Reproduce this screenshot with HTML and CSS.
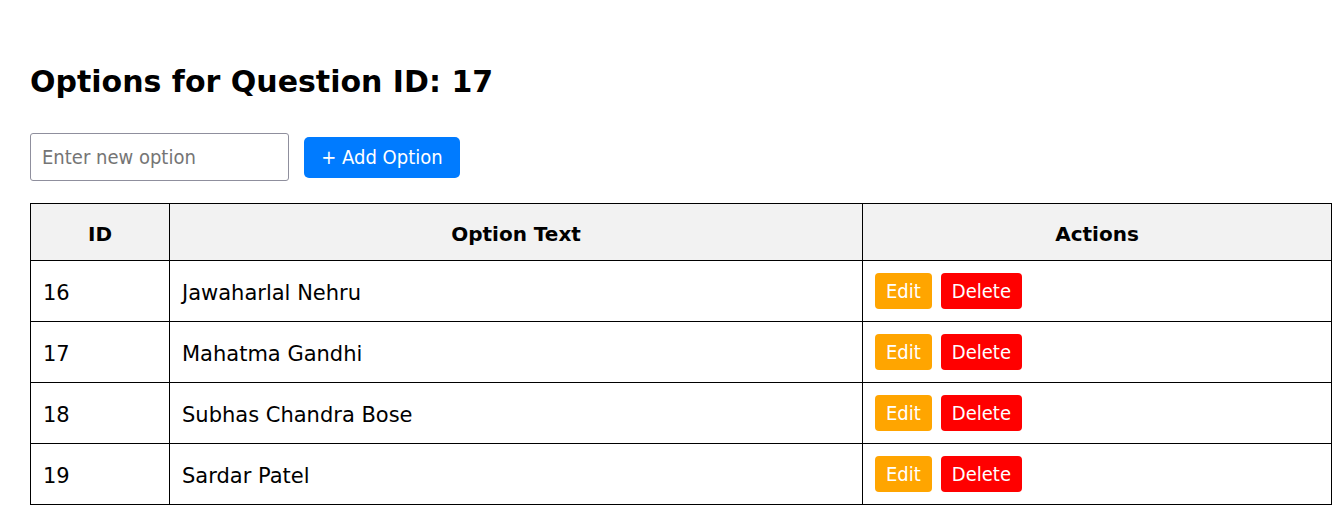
FILE: index.html
```html
<!DOCTYPE html>
<html lang="en">
<head>
<meta charset="utf-8">
<title>Options for Question ID: 17</title>
<link rel="stylesheet" href="styles.css">
</head>
<body>
<div class="page">
  <h1 class="title">Options for Question ID: 17</h1>
  <div class="add-row">
    <input class="option-input" type="text" placeholder="Enter new option">
    <button class="btn btn-add">+ Add Option</button>
  </div>
  <table class="options-table">
    <thead>
      <tr>
        <th class="col-id">ID</th>
        <th class="col-text">Option Text</th>
        <th class="col-actions">Actions</th>
      </tr>
    </thead>
    <tbody>
      <tr>
        <td class="cell-text">16</td>
        <td class="cell-text">Jawaharlal Nehru</td>
        <td class="cell-actions"><div class="actions"><button class="btn btn-edit">Edit</button><button class="btn btn-delete">Delete</button></div></td>
      </tr>
      <tr>
        <td class="cell-text">17</td>
        <td class="cell-text">Mahatma Gandhi</td>
        <td class="cell-actions"><div class="actions"><button class="btn btn-edit">Edit</button><button class="btn btn-delete">Delete</button></div></td>
      </tr>
      <tr>
        <td class="cell-text">18</td>
        <td class="cell-text">Subhas Chandra Bose</td>
        <td class="cell-actions"><div class="actions"><button class="btn btn-edit">Edit</button><button class="btn btn-delete">Delete</button></div></td>
      </tr>
      <tr>
        <td class="cell-text">19</td>
        <td class="cell-text">Sardar Patel</td>
        <td class="cell-actions"><div class="actions"><button class="btn btn-edit">Edit</button><button class="btn btn-delete">Delete</button></div></td>
      </tr>
    </tbody>
  </table>
</div>
</body>
</html>
```
FILE: styles.css
```css
html, body {
  margin: 0;
  padding: 0;
  background: #ffffff;
}

body {
  font-family: "DejaVu Sans", sans-serif;
  color: #000000;
}

.page {
  padding: 30px 0 0 30px;
}

.title {
  margin: 32px 0 31px 0;
  font-size: 30px;
  line-height: 40px;
  font-weight: bold;
}

.add-row {
  display: flex;
  align-items: center;
  gap: 15px;
  margin-bottom: 22px;
}

.option-input {
  box-sizing: border-box;
  width: 259px;
  height: 48px;
  padding: 0 11px;
  border: 1px solid #8f8f9d;
  border-radius: 3px;
  font-family: "DejaVu Sans Condensed", "DejaVu Sans", sans-serif;
  font-size: 20px;
  color: #000;
  outline: none;
}

.option-input::placeholder {
  color: #757575;
}

.btn {
  font-family: "DejaVu Sans Condensed", "DejaVu Sans", sans-serif;
  border: none;
  color: #ffffff;
  font-size: 20px;
  cursor: pointer;
  border-radius: 5px;
}

.btn-add {
  height: 41px;
  width: 156px;
  padding: 0;
  background: #007bff;
}

.options-table {
  width: 1302px;
  border-collapse: collapse;
  font-size: 21px;
}

.options-table th,
.options-table td {
  border: 1px solid #000000;
  text-align: left;
  line-height: 36px;
}

.options-table th {
  background: #f2f2f2;
  text-align: center;
  padding: 12px 12px 8px;
  font-size: 20px;
  font-weight: bold;
}

.cell-text {
  padding: 14px 12px 10px;
}

.cell-actions {
  padding: 12px;
}

.col-id { width: 114px; }
.col-text { width: 668px; }

.actions {
  display: flex;
  gap: 9px;
}

.btn-edit,
.btn-delete {
  height: 36px;
  padding: 0 11px;
  border-radius: 4px;
  line-height: 36px;
}

.btn-edit { background: #ffa500; }
.btn-delete { background: #ff0000; }
```
